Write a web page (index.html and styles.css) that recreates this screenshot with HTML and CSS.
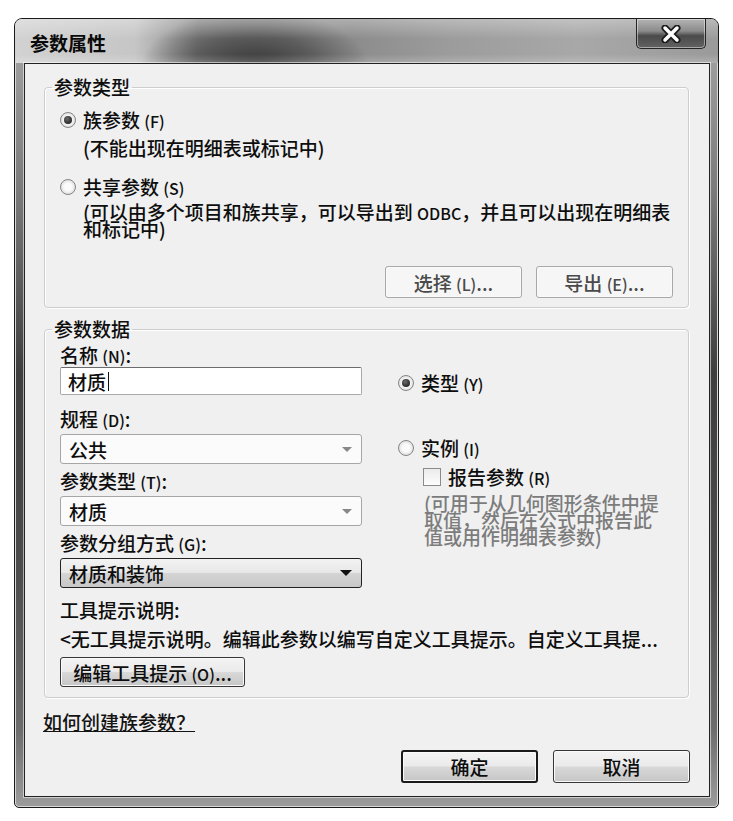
FILE: index.html
```html
<!DOCTYPE html>
<html lang="zh-CN">
<head>
  <meta charset="UTF-8">
  <title>参数属性</title>
  <link rel="stylesheet" href="styles.css">
</head>
<body>
  <div class="window">
    <div class="titlebar">
      <span class="title">参数属性</span>
      <button class="close-button" aria-label="关闭">
        <svg width="24" height="18" viewBox="0 0 24 18">
          <path d="M6 3 L18 15 M18 3 L6 15" stroke="#1c1c1c" stroke-width="7" stroke-linecap="round"/>
          <path d="M6 3 L18 15 M18 3 L6 15" stroke="#fff" stroke-width="3.5" stroke-linecap="round"/>
        </svg>
      </button>
    </div>

    <div class="client">
      <!-- 参数类型 -->
      <fieldset class="group group-type">
        <legend>参数类型</legend>
        <label class="radio-row family-row"><span class="radio checked"></span><span>族参数 <span class="key">(F)</span></span></label>
        <p class="note">(不能出现在明细表或标记中)</p>
        <label class="radio-row shared-row"><span class="radio"></span><span>共享参数 <span class="key">(S)</span></span></label>
        <p class="note note-wrap">(可以由多个项目和族共享，可以导出到 <span class="key">ODBC</span>，并且可以出现在明细表<br>和标记中)</p>
        <div class="group-buttons">
          <button class="btn btn-flat">选择 <span class="key">(L)</span>...</button>
          <button class="btn btn-flat">导出 <span class="key">(E)</span>...</button>
        </div>
      </fieldset>

      <!-- 参数数据 -->
      <fieldset class="group group-data">
        <legend>参数数据</legend>
        <div class="data-columns">
          <div class="data-fields">
            <div class="field-label first-label">名称 <span class="key">(N)</span>:</div>
            <div class="text-input">材质<span class="caret"></span></div>
            <div class="field-label">规程 <span class="key">(D)</span>:</div>
            <div class="select">公共</div>
            <div class="field-label">参数类型 <span class="key">(T)</span>:</div>
            <div class="select">材质</div>
            <div class="field-label">参数分组方式 <span class="key">(G)</span>:</div>
            <div class="select select-active">材质和装饰</div>
          </div>
          <div class="data-options">
            <label class="radio-row type-row"><span class="radio checked"></span><span>类型 <span class="key">(Y)</span></span></label>
            <label class="radio-row instance-row"><span class="radio"></span><span>实例 <span class="key">(I)</span></span></label>
            <label class="check-row"><span class="checkbox"></span><span>报告参数 <span class="key">(R)</span></span></label>
            <p class="hint">(可用于从几何图形条件中提<br>取值，然后在公式中报告此<br>值或用作明细表参数)</p>
          </div>
        </div>
        <div class="field-label tooltip-label">工具提示说明:</div>
        <div class="tooltip-text">&lt;无工具提示说明。编辑此参数以编写自定义工具提示。自定义工具提...</div>
        <button class="btn btn-tooltip">编辑工具提示 <span class="key">(O)</span>...</button>
      </fieldset>

      <div class="footer">
        <a class="help-link" href="#">如何创建族参数？</a>
        <div class="dialog-buttons">
          <button class="btn btn-default">确定</button>
          <button class="btn">取消</button>
        </div>
      </div>
    </div>
  </div>
</body>
</html>
```

FILE: styles.css
```css
body {
  margin: 0;
  background: #fff;
  font-family: "Noto Sans CJK SC", "Noto Sans", sans-serif;
  font-size: 19px;
  font-weight: 500;
  color: #0e0e0e;
}
p {
  margin: 0;
}

/* window frame */
.window {
  width: 686px;
  margin: 18px 0 0 14px;
  padding: 0 8px 10px 9px;
  border: 1px solid #1a1a1a;
  border-radius: 8px 8px 5px 5px;
  overflow: hidden;
  background: linear-gradient(180deg, #a8a8a8 0%, #7a7a7a 22%, #3e3e3e 45%, #4c4c4c 70%, #6c6c6c 90%, #9c9c9c 100%);
  box-shadow: inset 0 0 0 1px #d8d8d8;
}
.titlebar {
  display: flex;
  justify-content: space-between;
  align-items: flex-start;
  height: 44px;
  margin: 0 -8px 0 -9px;
  padding: 0 12px;
  background:
    linear-gradient(180deg, rgba(255,255,255,0.3) 0%, rgba(255,255,255,0) 45%, rgba(255,255,255,0) 80%, rgba(255,255,255,0.2) 100%),
    radial-gradient(ellipse 115px 60px at 240px 50px, rgba(45,45,45,0.95), rgba(45,45,45,0.5) 55%, rgba(45,45,45,0) 100%),
    linear-gradient(90deg, #d2d2d2 0%, #c6c6c6 17%, #8a8a8a 26%, #8c8c8c 48%, #9c9c9c 62%, #a8a8a8 80%, #9a9a9a 100%);
}
.title {
  margin-top: 12px;
  margin-left: 3px;
  font-size: 19px;
  font-weight: 700;
  line-height: 24px;
  color: #0a0a0a;
}
.close-button {
  display: flex;
  align-items: center;
  justify-content: center;
  width: 70px;
  height: 30px;
  padding: 0;
  border: 1px solid #242424;
  border-top: none;
  border-radius: 0 0 5px 5px;
  background: linear-gradient(180deg, #b4b4b4 0%, #8a8a8a 42%, #4a4a4a 58%, #626262 100%);
  box-shadow: inset 0 0 0 1px rgba(255,255,255,0.45);
}

/* client area */
.client {
  padding: 0 0 13px;
  border: 1px solid #222;
  background: #f0f0f0;
  box-shadow: 0 0 0 1px rgba(255,255,255,0.55);
}

.group {
  margin: 0 20px 0 19px;
  padding: 0 15px;
  border: 1px solid #cdcdcd;
  border-radius: 4px;
  box-shadow: inset 1px 1px 0 #fff, 1px 1px 0 #fff;
}
.group legend {
  margin-left: -8px;
  padding: 0 2px;
  line-height: 24px;
}
.group-type {
  margin-top: 11px;
  padding-bottom: 9px;
}
.group-data {
  margin-top: 9px;
  padding-bottom: 10px;
}

.key {
  font-size: 16px;
  line-height: 1;
}

/* radios and checkbox */
.radio-row,
.check-row {
  display: flex;
  align-items: center;
  line-height: 24px;
}
.radio {
  display: flex;
  align-items: center;
  justify-content: center;
  flex: none;
  box-sizing: border-box;
  width: 16px;
  height: 16px;
  margin-right: 7px;
  border: 1px solid #858585;
  border-radius: 50%;
  background: radial-gradient(circle, #fbfbfb 0 35%, #cfcfcf 100%);
}
.radio.checked::after {
  content: '';
  width: 8px;
  height: 8px;
  border-radius: 50%;
  background: radial-gradient(circle at 40% 35%, #6a6a6a, #0e0e0e);
}
.checkbox {
  flex: none;
  box-sizing: border-box;
  width: 18px;
  height: 18px;
  margin-right: 7px;
  border: 1px solid #8a8a8a;
  background: linear-gradient(180deg, #ebebeb, #fdfdfd);
}

.family-row {
  margin-top: 9px;
}
.note {
  margin-top: 4px;
  margin-left: 23px;
  line-height: 24px;
}
.shared-row {
  margin-top: 15px;
}
.note-wrap {
  margin-top: 5px;
  line-height: 16px;
}

/* buttons */
.btn {
  font: inherit;
  color: #0e0e0e;
  height: 33px;
  width: 137px;
  padding: 0;
  border: 1px solid #363636;
  border-radius: 3px;
  background: linear-gradient(180deg, #f3f3f3 0%, #ebebeb 48%, #d8d8d8 52%, #c6c6c6 100%);
  box-shadow: inset 0 0 0 1px #fafafa;
}
.btn-flat {
  height: 32px;
  border-color: #a8a8a8;
  background: #f6f6f6;
  color: #4a4a4a;
}
.btn-default {
  border: 2px solid #1a1a1a;
}
.btn-tooltip {
  width: 185px;
  height: 30px;
  margin-top: 6px;
}
.group-buttons {
  display: flex;
  justify-content: flex-end;
  gap: 14px;
  margin-top: 29px;
}

/* data section */
.data-columns {
  display: grid;
  grid-template-columns: 302px 1fr;
  column-gap: 36px;
}
.field-label {
  margin-top: 5px;
  line-height: 24px;
}
.first-label {
  margin-top: 2px;
}
.text-input {
  display: flex;
  align-items: center;
  box-sizing: border-box;
  height: 28px;
  margin-bottom: 12px;
  padding-left: 7px;
  border: 1px solid #a9a9a9;
  border-top-color: #6c6c6c;
  border-radius: 2px;
  background: #fff;
}
.caret {
  width: 1px;
  height: 19px;
  margin-left: 2px;
  background: #111;
}
.select {
  display: flex;
  align-items: center;
  justify-content: space-between;
  box-sizing: border-box;
  height: 30px;
  margin-top: 3px;
  padding-left: 8px;
  border: 1px solid #a6a6a6;
  border-radius: 3px;
  background: #fbfbfb;
}
.select::after {
  content: '';
  margin-right: 9px;
  border-left: 5px solid transparent;
  border-right: 5px solid transparent;
  border-top: 5px solid #888;
}
.select-active {
  border-color: #222;
  background: linear-gradient(180deg, #f3f3f3 0%, #e8e8e8 48%, #d4d4d4 52%, #c8c8c8 100%);
}
.select-active::after {
  border-left-width: 6px;
  border-right-width: 6px;
  border-top: 6px solid #111;
}

.type-row {
  margin-top: 30px;
}
.instance-row {
  margin-top: 41px;
}
.check-row {
  margin-top: 5px;
  margin-left: 25px;
}
.hint {
  margin-top: 5px;
  margin-left: 26px;
  line-height: 17px;
  color: #7c7c7c;
}

.tooltip-label {
  margin-top: 10px;
}
.tooltip-text {
  margin-top: 5px;
  line-height: 24px;
  white-space: nowrap;
}

/* footer */
.footer {
  display: flex;
  flex-direction: column;
  margin-top: 12px;
}
.help-link {
  align-self: flex-start;
  margin-left: 18px;
  line-height: 24px;
  color: #141414;
  text-decoration: underline;
}
.dialog-buttons {
  display: flex;
  justify-content: flex-end;
  gap: 15px;
  margin: 16px 19px 0 0;
}
```
